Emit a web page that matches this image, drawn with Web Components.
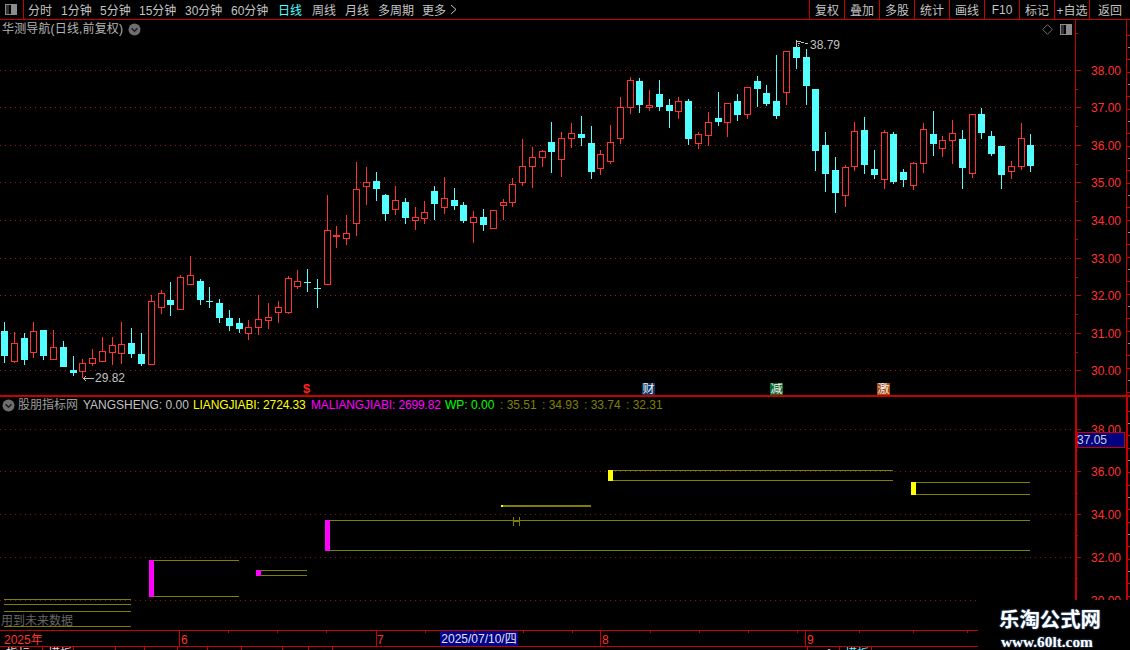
<!DOCTYPE html>
<html lang="zh">
<head>
<meta charset="utf-8">
<title>K线</title>
<style>
html,body{margin:0;background:#000;height:650px;overflow:hidden}
body{font:12px "Liberation Sans","Noto Sans CJK SC",sans-serif;color:#c8c8c8}
</style>
</head>
<body>
<stock-terminal>
  <top-toolbar></top-toolbar>
  <kline-panel></kline-panel>
  <indicator-panel></indicator-panel>
  <time-axis></time-axis>
  <water-mark>
    <span slot="name">乐淘公式网</span>
    <span slot="url">www.60lt.com</span>
  </water-mark>
</stock-terminal>
<script>
const FONT='"Liberation Sans","Noto Sans CJK SC",sans-serif';
const RED='#c80000',UP='#ff3232',DOWN='#54ffff',OLIVE='#808000';

function svgDots(ys,x2,color){
  return ys.map(y=>`<line x1="0" x2="${x2}" y1="${y+.5}" y2="${y+.5}" stroke="${color}" stroke-dasharray="1 4"/>`).join('');
}
const halfIcon=`<svg width="13" height="11" viewBox="0 0 13 11" shape-rendering="crispEdges"><rect x=".5" y=".5" width="11" height="10" rx="1" fill="#000" stroke="#8c8c8c"/><rect x="1" y="1" width="3" height="9" fill="#333"/><rect x="6" y="1" width="5" height="9" fill="#8c8c8c"/></svg>`;
const chevron=`<svg width="13" height="13" viewBox="0 0 13 13"><circle cx="6.5" cy="6.5" r="6" fill="#6e6e6e"/><path d="M3.6 5.2 6.5 8.2 9.4 5.2" fill="none" stroke="#1c1c1c" stroke-width="1.5"/></svg>`;

class StockTerminal extends HTMLElement{
  constructor(){super();this.attachShadow({mode:'open'}).innerHTML=`
  <style>:host{display:flex;flex-direction:column;position:relative;width:1130px;height:650px;overflow:hidden;background:#000}</style><slot></slot>`;}
}
class TopToolbar extends HTMLElement{
  constructor(){super();
    const left=[['分时',28],['1分钟',61],['5分钟',100],['15分钟',139],['30分钟',185],['60分钟',231],['日线',278,1],['周线',312],['月线',345],['多周期',378],['更多',422]];
    const right=['复权','叠加','多股','统计','画线','F10','标记','+自选','返回'];
    this.attachShadow({mode:'open'}).innerHTML=`
    <style>
    :host{display:flex;height:19px;border-bottom:1px solid ${RED};font:12px ${FONT};color:#c4c4c4;flex:none}
    .logo{width:23px;border-right:1px solid ${RED};display:flex;align-items:center;justify-content:center;flex:none}
    .tabs{flex:1;display:flex;align-items:center;padding-left:4px;white-space:nowrap}
    .tabs span{display:block}
    .on{color:#54ffff}
    .cells{display:grid;grid-template-columns:repeat(8,35px) 41px}
    .cells div{border-left:1px solid ${RED};display:flex;align-items:center;justify-content:center}
    </style>
    <div class="logo">${halfIcon}</div>
    <div class="tabs">${left.map((t,i)=>{
      const next=i+1<left.length?left[i+1][1]:450;
      return `<span class="${t[2]?'on':''}" style="width:${next-t[1]}px">${t[0]}</span>`;}).join('')}
      <svg width="7" height="11" viewBox="0 0 7 11"><path d="M1 1 6 5.5 1 10" fill="none" stroke="#c4c4c4"/></svg>
    </div>
    <div class="cells">${right.map(t=>`<div>${t}</div>`).join('')}</div>`;
  }
}
/* x, wickTop, bodyTop, bodyBottom, wickBottom, up? */
const C=[[4,322,331,356,363,0],[14,332,343,362,363,1],[24,333,338,360,365,0],[33,322,331,353,358,1],[43,330,330,356,360,0],[53,330,347,360,360,1],[63,341,347,367,367,0],[73,356,370,373,376,0],[82,359,363,372,378,1],[92,349,358,364,366,1],[102,337,351,362,362,1],[112,337,345,353,365,1],[121,322,344,354,364,1],[131,328,343,354,358,0],[141,333,354,364,366,0],[151,295,301,365,365,1],[161,290,293,308,314,1],[170,282,300,305,316,0],[180,275,277,310,310,1],[190,256,275,285,285,1],[200,279,281,300,305,0],[209,287,301,302,308,0],[219,299,303,318,323,0],[229,310,318,326,331,0],[239,318,323,329,333,0],[248,320,327,334,340,1],[258,295,319,328,335,1],[268,303,317,321,329,1],[278,301,307,313,323,1],[288,276,278,313,314,1],[297,270,281,287,289,1],[307,269,282,283,292,0],[317,279,288,289,308,0],[327,195,230,285,285,1],[336,226,235,237,248,1],[346,215,233,239,245,1],[356,162,189,224,236,1],[366,167,182,187,205,1],[376,172,181,189,201,0],[385,194,195,214,221,0],[395,186,200,210,215,1],[405,198,202,218,224,0],[415,207,217,221,230,1],[424,201,212,219,224,1],[434,186,191,204,220,0],[444,177,198,208,214,1],[454,188,200,206,210,0],[463,202,205,221,223,0],[473,211,217,223,243,1],[483,209,217,225,231,0],[493,210,210,229,229,1],[503,199,202,206,220,1],[512,178,184,203,207,1],[522,139,166,183,186,1],[532,147,157,167,188,1],[542,150,151,158,167,1],[551,122,142,152,173,0],[561,132,138,160,177,1],[571,123,133,139,148,1],[581,116,134,138,146,0],[591,126,143,172,179,0],[600,150,154,169,175,1],[610,125,142,162,164,1],[620,97,107,139,144,1],[630,77,80,108,114,1],[639,78,81,105,113,0],[649,90,105,108,111,1],[659,80,94,107,111,0],[669,99,105,111,128,0],[678,97,101,112,119,1],[688,99,101,139,145,0],[698,132,134,144,149,1],[708,112,122,136,146,1],[718,92,118,122,126,0],[727,103,103,123,137,1],[737,94,101,115,121,0],[747,87,87,115,119,1],[757,76,81,89,107,0],[766,85,93,104,106,0],[776,55,101,116,119,0],[786,51,51,93,105,1],[796,40,47,58,69,0],[806,49,57,86,105,0],[815,89,89,151,171,0],[825,132,145,174,192,0],[835,157,170,193,213,0],[845,165,167,196,207,1],[854,122,131,167,171,1],[864,117,130,165,174,0],[874,150,169,175,179,0],[884,130,132,180,189,1],[893,132,134,182,184,0],[903,169,172,180,187,0],[913,162,163,186,190,1],[923,123,129,164,173,1],[933,111,134,144,156,0],[942,136,140,149,157,1],[952,120,133,141,164,1],[962,130,139,168,189,0],[972,114,114,174,178,1],[981,108,114,133,139,0],[991,131,136,154,156,0],[1001,146,146,175,189,0],[1011,161,166,172,179,1],[1021,123,138,167,170,1],[1030,134,145,166,172,0]];

function candle([x,wt,bt,bb,wb,up]){
  const col=up?UP:DOWN,cx=x+.5;
  let s='';
  if(wt<bt) s+=`<line x1="${cx}" x2="${cx}" y1="${wt}" y2="${bt}" stroke="${col}"/>`;
  if(wb>bb) s+=`<line x1="${cx}" x2="${cx}" y1="${bb}" y2="${wb}" stroke="${col}"/>`;
  if(up) s+=`<rect x="${x-3+.5}" y="${bt+.5}" width="6" height="${bb-bt-1}" fill="#000" stroke="${col}"/>`;
  else s+=`<rect x="${x-3}" y="${bt}" width="7" height="${Math.max(bb-bt,1)}" fill="${col}"/>`;
  return s;
}
class AxisScale extends HTMLElement{
  connectedCallback(){
    if(this.shadowRoot)return;
    const top=+this.getAttribute('top'),h=+this.getAttribute('height');
    const labels=JSON.parse(this.getAttribute('labels'));
    const minors=JSON.parse(this.getAttribute('minors'));
    const thick=this.hasAttribute('thick');
    const lw=thick?2:1;
    let s=`<rect x="0" y="${top}" width="${lw}" height="${h}" fill="${RED}"/>`;
    labels.forEach(([y,t])=>{
      s+=`<rect x="0" y="${y}" width="6" height="1" fill="${RED}"/><text x="16" y="${y+5}" fill="${UP}" font-size="12">${t}</text>`;
    });
    minors.forEach(y=>{s+=`<rect x="0" y="${y}" width="3" height="1" fill="${RED}"/>`;});
    s+=`<rect x="51" y="${top}" width="${lw}" height="${h}" fill="${RED}"/>`;
    for(let y=top+15;y<top+h;y+=37){
      s+=`<rect x="52" y="${y}" width="3" height="1" fill="${RED}"/><rect x="53" y="${y+12}" width="2" height="1" fill="#8c8c8c"/><rect x="52" y="${y+24}" width="3" height="1" fill="${RED}"/>`;
    }
    this.attachShadow({mode:'open'}).innerHTML=`<style>:host{display:block;width:55px;flex:none}svg{display:block;font-family:${FONT}}</style>
    <svg width="55" height="${h}" viewBox="0 ${top} 55 ${h}" shape-rendering="crispEdges">${s}</svg>`;
  }
}
customElements.define('axis-scale',AxisScale);

class KlinePanel extends HTMLElement{
  constructor(){super();
    const ys=[70,107,145,182,220,258,295,333,370];
    const mark=(x,t,bg)=>`<span class="mk" style="left:${x}px;background:${bg}">${t}</span>`;
    this.attachShadow({mode:'open'}).innerHTML=`
    <style>
    :host{display:flex;height:376px;flex:none;position:relative;font:12px ${FONT}}
    svg.main{display:block;flex:none}
    .title{position:absolute;left:2px;top:2px;display:flex;align-items:center;gap:5px;color:#b4b4b4;line-height:14px;white-space:nowrap}
    .title span{letter-spacing:.15px}
    .tools{position:absolute;left:1042px;top:4px;display:flex;align-items:center;gap:7px}
    .mk{position:absolute;top:363px;width:13px;height:13px;line-height:13px;text-align:center;color:#f0f0f0;font-size:12px;overflow:hidden}
    .sym{position:absolute;left:301px;top:362px;width:11px;color:#ff2020;font-weight:bold;line-height:14px;font-size:13px;text-align:center}
    .ext{position:absolute;color:#c0c0c0;line-height:12px}
    </style>
    <svg class="main" width="1075" height="376" viewBox="0 20 1075 376" shape-rendering="crispEdges">
      ${svgDots(ys,1075,'#a01818')}
      ${C.map(candle).join('')}
      <path d="M796.5 40V46M797 41H801M801 42H804M805 43H808M798 43H800M798 45H799" fill="none" stroke="#c0c0c0"/>
      <path d="M83 378.5H94M83.5 378.5H85M84 377V380M85 376V377M85 380V381" fill="none" stroke="#c0c0c0"/>
    </svg>
    <axis-scale top="20" height="376" labels='[[70,"38.00"],[107,"37.00"],[145,"36.00"],[182,"35.00"],[220,"34.00"],[258,"33.00"],[295,"32.00"],[333,"31.00"],[370,"30.00"]]' minors='[33,89,126,164,201,239,277,314,352]'></axis-scale>
    <div class="title"><span>华测导航(日线,前复权)</span>${chevron}</div>
    <div class="tools">
      <svg width="11" height="11" viewBox="0 0 11 11"><path d="M5.5.7 10.3 5.5 5.5 10.3.7 5.5Z" fill="none" stroke="#707070"/></svg>
      ${halfIcon}
    </div>
    <span class="ext" style="left:810px;top:19px">38.79</span>
    <span class="ext" style="left:95px;top:352px">29.82</span>
    <span class="sym">$</span>
    ${mark(642,'财','#08396b')}${mark(770,'减','#0b6b2c')}${mark(877,'激','#a84a10')}`;
  }
}
class IndicatorPanel extends HTMLElement{
  constructor(){super();
    const ys=[429,471,514,557,600];
    const R=(x,y,w,h,c)=>`<rect x="${x}" y="${y}" width="${w}" height="${h}" fill="${c}"/>`;
    const bands=[
      [149,560,596,239,'#ff00ff',597],[256,570,575,307,'#ff00ff',576],[325,520,550,1030,'#ff00ff',551],
      [608,470,480,893,'#ffff00',481],[911,482,494,1030,'#ffff00',495]
    ];
    let shapes=bands.map(([x,a,b,x2,c,e])=>R(x+3,a,x2-x-3,1,OLIVE)+R(x+3,b,x2-x-3,1,OLIVE)+R(x,a,5,e-a,c)).join('');
    shapes+=R(501,505,90,2,OLIVE)+R(501,505,2,2,'#ffff00');
    [599,604,611,626].forEach(y=>shapes+=R(4,y,127,1,OLIVE));
    shapes+=`<path d="M513.5 517V526M519.5 517V526M513 521.5H520" fill="none" stroke="${OLIVE}"/>`;
    this.attachShadow({mode:'open'}).innerHTML=`
    <style>
    :host{display:flex;height:234px;flex:none;position:relative;font:12px ${FONT}}
    .rule{position:absolute;left:0;right:0;top:0;height:1px;background:${RED}}
    .rule2{position:absolute;left:0;right:0;top:-1px;height:1px;background:${RED}}
    svg.main{display:block;flex:none}
    .head{position:absolute;left:2px;top:2px;height:14px;line-height:14px;display:flex;align-items:center;white-space:nowrap}
    .head > *{flex:none}
    .n{color:#9c9c9c;margin-left:3px;width:65px}
    .v{color:#c0c0c0;width:110px}
    .y{color:#ffff00;width:118px;letter-spacing:-.11px}
    .m{color:#ff00ff;width:134px;letter-spacing:-.14px}
    .g{color:#00ff00;width:54px}
    .o{color:${OLIVE};display:inline-block;width:42px;box-sizing:border-box;padding-left:1px}
    .warn{position:absolute;left:1px;top:218px;color:#666;line-height:14px}
    .tag{position:absolute;left:1077px;top:36px;width:48px;height:16px;box-sizing:border-box;background:#000080;border:1px solid ${RED};color:#d0d0d0;line-height:14px;text-indent:-1px}
    </style>
    <svg class="main" width="1075" height="234" viewBox="0 396 1075 234" shape-rendering="crispEdges">
      ${svgDots(ys,1075,'#801414')}
      ${shapes}
    </svg>
    <axis-scale thick top="396" height="234" labels='[[429,"38.00"],[471,"36.00"],[514,"34.00"],[557,"32.00"],[600,"30.00"]]' minors='[450,493,535,578]'></axis-scale>
    <div class="rule"></div><div class="rule2"></div>
    <div class="head">${chevron}
      <span class="n">股朋指标网</span>
      <span class="v">YANGSHENG: 0.00</span>
      <span class="y">LIANGJIABI: 2724.33</span>
      <span class="m">MALIANGJIABI: 2699.82</span>
      <span class="g">WP: 0.00</span>
      <span class="o">: 35.51</span><span class="o">: 34.93</span><span class="o">: 33.74</span><span class="o">: 32.31</span>
    </div>
    <span class="warn">用到未来数据</span>
    <span class="tag">37.05</span>`;
  }
}
class TimeAxis extends HTMLElement{
  constructor(){super();
    const seps=[179,376,600,805];
    const ticks=[228,277,326,425,474,523,572,650,699,748,797,859,913,967];
    const lbl=[[4,'2025年'],[181,'6'],[377,'7'],[602,'8'],[807,'9']];
    const tabs=[42,73,115,144,177,207,241,282,308,332,807,839,871];
    this.attachShadow({mode:'open'}).innerHTML=`
    <style>
    :host{display:block;flex:none;height:20px;position:relative;font:12px ${FONT};overflow:hidden}
    svg{display:block;position:absolute;left:0;top:0}
    .row{display:block;height:16px;position:relative;color:${UP};line-height:16px}
    .row span{position:absolute;top:2px}
    .row .cur{left:440px;top:1px;width:78px;height:15px;background:#00008c;color:#e0e0e0;line-height:16px;text-align:center;white-space:nowrap}
    .tabs{position:absolute;left:0;top:16px;height:4px;width:1130px;overflow:hidden;font-size:12px;color:#e0e0e0;line-height:14px}
    .tabs span{position:absolute;top:1px;white-space:nowrap}
    </style>
    <div class="row">${lbl.map(([x,t])=>`<span style="left:${x}px">${t}</span>`).join('')}
      <span class="cur">2025/07/10/四</span>
    </div>
    <div class="tabs">
      <span style="left:6px">指标</span><span style="left:48px">模板</span><span style="left:825px">A</span><span style="left:845px;color:#54ffff">模板</span>
    </div>
    <svg width="1130" height="20" viewBox="0 630 1130 20" shape-rendering="crispEdges">
      <rect x="0" y="630" width="1130" height="1" fill="${RED}"/>
      <rect x="0" y="646" width="1130" height="1" fill="${RED}"/>
      ${seps.map(x=>`<rect x="${x}" y="630" width="1" height="16" fill="${RED}"/>`).join('')}
      ${ticks.map(x=>`<rect x="${x}" y="631" width="1" height="2" fill="${RED}"/>`).join('')}
      ${tabs.map(x=>`<rect x="${x}" y="646" width="1" height="4" fill="${RED}"/>`).join('')}
    </svg>`;
  }
}
class WaterMark extends HTMLElement{
  constructor(){super();
    this.attachShadow({mode:'open'}).innerHTML=`
    <style>
    :host{position:absolute;right:0;bottom:0;width:152px;height:50px;background:#000;display:flex;flex-direction:column;align-items:flex-start;font-family:"Liberation Serif","Noto Sans CJK SC",serif;color:#fff;font-weight:bold}
    .a{font-size:20.4px;line-height:24px;margin:8px 0 0 21px;text-shadow:0 0 2px #5a8cc8}
    .b{font-size:15.3px;line-height:16px;margin:2px 0 0 23px;text-shadow:0 0 2px #5a8cc8}
    </style>
    <div class="a"><slot name="name"></slot></div><div class="b"><slot name="url"></slot></div>`;
  }
}
customElements.define('stock-terminal',StockTerminal);
customElements.define('top-toolbar',TopToolbar);
customElements.define('kline-panel',KlinePanel);
customElements.define('indicator-panel',IndicatorPanel);
customElements.define('time-axis',TimeAxis);
customElements.define('water-mark',WaterMark);
</script>
</body>
</html>
